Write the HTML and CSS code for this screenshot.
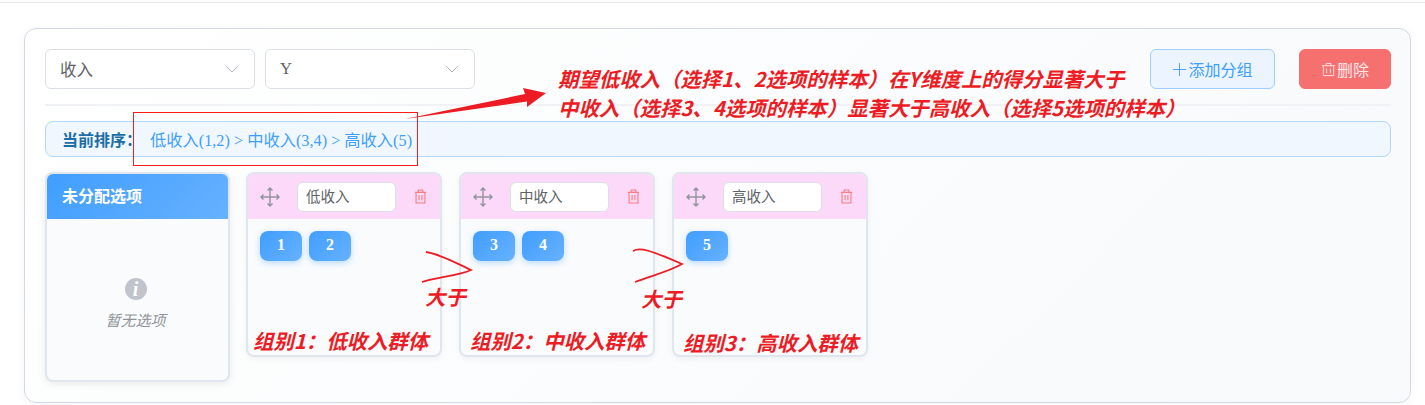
FILE: index.html
```html
<!DOCTYPE html>
<html lang="zh-CN">
<head>
  <meta charset="UTF-8">
  <meta name="viewport" content="width=device-width, initial-scale=1.0">
  <title>选项分组</title>
  <link rel="stylesheet" href="styles.css">
</head>
<body>
  <div class="topLine"></div>
  <div class="card">
    <div class="toolbar">
      <div class="select">收入
        <svg class="chevron" viewBox="0 0 14 8"><path d="M1 1l6 6 6-6"/></svg>
      </div>
      <div class="select">Y
        <svg class="chevron" viewBox="0 0 14 8"><path d="M1 1l6 6 6-6"/></svg>
      </div>
      <button type="button" class="btn addBtn">
        <svg class="btnIcon" viewBox="0 0 16 16"><path d="M8 1v14M1 8h14"/></svg>添加分组
      </button>
      <button type="button" class="btn delBtn">
        <svg class="btnIcon" viewBox="0 0 16 16"><path d="M1 4h14M5.500 4V1.500h5V4M2.500 4v10.500h11V4M6 7v5M10 7v5"/></svg>删除
      </button>
    </div>

    <div class="sortBar">
      <span class="sortLabel">当前排序：</span>
      <span class="sortValue">低收入(1,2) &gt; 中收入(3,4) &gt; 高收入(5)</span>
    </div>

    <div class="board">
      <div class="column pool">
        <div class="poolHead">未分配选项</div>
        <div class="poolBody">
          <span class="infoIcon">i</span>
          <span class="emptyText">暂无选项</span>
        </div>
      </div>

      <div class="column group">
        <div class="groupHead">
          <svg class="moveIcon" viewBox="0 0 20 20"><path d="M10 1v18M1 10h18M7.500 3.500L10 1l2.500 2.500M7.500 16.500L10 19l2.500-2.500M3.500 7.500L1 10l2.500 2.500M16.500 7.500L19 10l-2.500 2.500"/></svg>
          <div class="nameInput">低收入</div>
          <svg class="trashIcon" viewBox="0 0 14 16"><path d="M1 3.500h12M4.500 3.500V1h5v2.500M2.200 3.500V15h9.600V3.500M5.500 6.500v5.500M8.500 6.500v5.500"/></svg>
        </div>
        <div class="chips">
          <span class="chip">1</span>
          <span class="chip">2</span>
        </div>
      </div>

      <div class="column group">
        <div class="groupHead">
          <svg class="moveIcon" viewBox="0 0 20 20"><path d="M10 1v18M1 10h18M7.500 3.500L10 1l2.500 2.500M7.500 16.500L10 19l2.500-2.500M3.500 7.500L1 10l2.500 2.500M16.500 7.500L19 10l-2.500 2.500"/></svg>
          <div class="nameInput">中收入</div>
          <svg class="trashIcon" viewBox="0 0 14 16"><path d="M1 3.500h12M4.500 3.500V1h5v2.500M2.200 3.500V15h9.600V3.500M5.500 6.500v5.500M8.500 6.500v5.500"/></svg>
        </div>
        <div class="chips">
          <span class="chip">3</span>
          <span class="chip">4</span>
        </div>
      </div>

      <div class="column group">
        <div class="groupHead">
          <svg class="moveIcon" viewBox="0 0 20 20"><path d="M10 1v18M1 10h18M7.500 3.500L10 1l2.500 2.500M7.500 16.500L10 19l2.500-2.500M3.500 7.500L1 10l2.500 2.500M16.500 7.500L19 10l-2.500 2.500"/></svg>
          <div class="nameInput">高收入</div>
          <svg class="trashIcon" viewBox="0 0 14 16"><path d="M1 3.500h12M4.500 3.500V1h5v2.500M2.200 3.500V15h9.600V3.500M5.500 6.500v5.500M8.500 6.500v5.500"/></svg>
        </div>
        <div class="chips">
          <span class="chip">5</span>
        </div>
      </div>
    </div>
  </div>

  <!-- red notes drawn over the screenshot -->
  <div class="redBox"></div>
  <svg class="inkLayer" viewBox="0 0 1425 405">
    <polygon class="inkFill" points="405,119 525,94 523,88 546,93 527,107 527,101.500"/>
    <path class="inkLine" d="M426 252C440 254 458 264 471 270C458 276 436 277 422 282"/>
    <path class="inkLine" d="M633 251C640 247 650 250 682 264C668 272 650 276 635 282"/>
  </svg>
  <div class="note noteMain">期望低收入（选择1、2选项的样本）在Y维度上的得分显著大于<br>中收入（选择3、4选项的样本）显著大于高收入（选择5选项的样本）</div>
  <div class="note noteBig1">大于</div>
  <div class="note noteBig2">大于</div>
  <div class="note noteGroup1">组别1：低收入群体</div>
  <div class="note noteGroup2">组别2：中收入群体</div>
  <div class="note noteGroup3">组别3：高收入群体</div>
</body>
</html>
```

FILE: styles.css
```css
* {
  box-sizing: border-box;
}
html, body {
  height: 405px;
  overflow: hidden;
}
body {
  margin: 0;
  background: #fff;
  font-family: "Liberation Serif", "Noto Sans CJK SC", serif;
  font-size: 16px;
  color: #606266;
  position: relative;
}
.topLine {
  height: 1px;
  margin-top: 2px;
  background: #e8e8f0;
}
.card {
  height: 375px;
  margin: 25px 14px 0 24px;
  padding: 20px 19px 0 20px;
  border: 1px solid #d3d8e4;
  border-radius: 12px;
  background: linear-gradient(135deg, #fff, #f7f9fb);
  box-shadow: 0 2px 12px rgba(0,0,0,0.04);
}
.toolbar {
  display: flex;
  align-items: center;
  gap: 10px;
  padding-bottom: 15px;
  border-bottom: 2px solid #f0f2f5;
  height: 57px;
}
.select {
  width: 210px;
  height: 40px;
  padding: 0 15px 0 14px;
  display: flex;
  align-items: center;
  justify-content: space-between;
  font-size: 16.500px;
  background: #fff;
  border: 1px solid #dcdfe6;
  border-radius: 6px;
}
.chevron {
  width: 14px;
  height: 8px;
  fill: none;
  stroke: #b4b7bd;
  stroke-width: 1;
}
.btn {
  height: 40px;
  display: flex;
  align-items: center;
  justify-content: center;
  font: inherit;
  border-radius: 6px;
  padding: 0;
}
.btnIcon {
  width: 15px;
  height: 15px;
  fill: none;
  stroke: currentColor;
  stroke-width: 1;
  margin-right: 1px;
}
.addBtn {
  width: 125px;
  margin-left: auto;
  color: #409eff;
  background: #ecf5ff;
  border: 1px solid #a0cfff;
}
.delBtn {
  width: 92px;
  margin-left: 14px;
  color: #fde9e9;
  background: #f77070;
  border: 1px solid #f77070;
}
.sortBar {
  height: 36px;
  margin-top: 15px;
  padding-left: 16px;
  display: flex;
  align-items: center;
  background: #f0f7ff;
  border: 1px solid #b3d8ff;
  border-radius: 8px;
}
.sortLabel {
  font-weight: bold;
  color: #1b6ea8;
  margin-right: 8px;
}
.sortValue {
  font-size: 16.250px;
  color: #409eff;
}
.board {
  display: flex;
  align-items: flex-start;
  gap: 16px;
  margin-top: 15px;
}
.column {
  border: 2px solid #dfe6ee;
  border-radius: 8px;
  background: #fafbfd;
  overflow: hidden;
}
.pool {
  width: 185px;
  height: 210px;
  box-shadow: 0 2px 8px rgba(0,0,0,0.08);
  display: flex;
  flex-direction: column;
}
.group + .group {
  margin-left: 1px;
}
.poolHead {
  height: 45px;
  line-height: 45px;
  padding-left: 15px;
  font-weight: bold;
  color: #fff;
  background: linear-gradient(135deg, #409eff, #66b1ff);
}
.poolBody {
  flex: 1;
  display: flex;
  flex-direction: column;
  align-items: center;
  padding: 59px 4px 0 0;
}
.infoIcon {
  width: 22px;
  height: 22px;
  border-radius: 50%;
  background: #c0c4cc;
  color: #fff;
  font-size: 20px;
  font-weight: bold;
  font-style: italic;
  line-height: 22px;
  text-align: center;
}
.emptyText {
  margin-top: 9px;
  font-size: 15px;
  font-style: italic;
  color: #909399;
}
.group {
  width: 196px;
  height: 185px;
  box-shadow: 0 2px 6px rgba(0,0,0,0.05);
}
.groupHead {
  height: 45px;
  padding: 0 13px 0 12px;
  display: flex;
  align-items: center;
  background: #fcd9f9;
}
.moveIcon {
  width: 20px;
  height: 20px;
  fill: none;
  stroke: #90949e;
  stroke-width: 1.400;
}
.nameInput {
  width: 99px;
  height: 30px;
  line-height: 28px;
  margin-left: 17px;
  padding-left: 8px;
  font-size: 14.500px;
  background: #fff;
  border: 1px solid #dcdfe6;
  border-radius: 6px;
}
.trashIcon {
  width: 13px;
  height: 15px;
  margin-left: auto;
  fill: none;
  stroke: #f77f7f;
  stroke-width: 1.200;
}
.chips {
  display: flex;
  gap: 7px;
  padding: 12px 12px 0;
}
.chip {
  width: 42px;
  height: 30px;
  line-height: 28px;
  text-align: center;
  font-size: 16px;
  font-weight: bold;
  color: #fff;
  border-radius: 8px;
  background: linear-gradient(135deg, #409eff, #66b1ff);
  box-shadow: 0 2px 6px rgba(64,158,255,0.35);
}

/* annotations sit on top of the page */
.redBox {
  position: absolute;
  left: 133px;
  top: 112px;
  width: 285px;
  height: 54px;
  border: 1px solid #ff1a1a;
}
.inkLayer {
  position: absolute;
  left: 0;
  top: 0;
  width: 1425px;
  height: 405px;
}
.inkFill {
  fill: #ed1c24;
}
.inkLine {
  fill: none;
  stroke: #ed1c24;
  stroke-width: 1.800;
}
.note {
  position: absolute;
  font-family: "Noto Sans CJK SC", sans-serif;
  font-size: 20.400px;
  font-weight: bold;
  font-style: italic;
  color: #ed1c24;
  white-space: nowrap;
}
.noteMain {
  left: 558px;
  top: 64px;
  line-height: 29px;
}
.noteBig1 {
  left: 425px;
  top: 284px;
  line-height: 24px;
}
.noteBig2 {
  left: 641px;
  top: 286px;
  line-height: 24px;
}
.noteGroup1 {
  left: 253px;
  top: 325px;
  line-height: 30px;
}
.noteGroup2 {
  left: 470px;
  top: 325px;
  line-height: 30px;
}
.noteGroup3 {
  left: 683px;
  top: 327px;
  line-height: 30px;
}
```
